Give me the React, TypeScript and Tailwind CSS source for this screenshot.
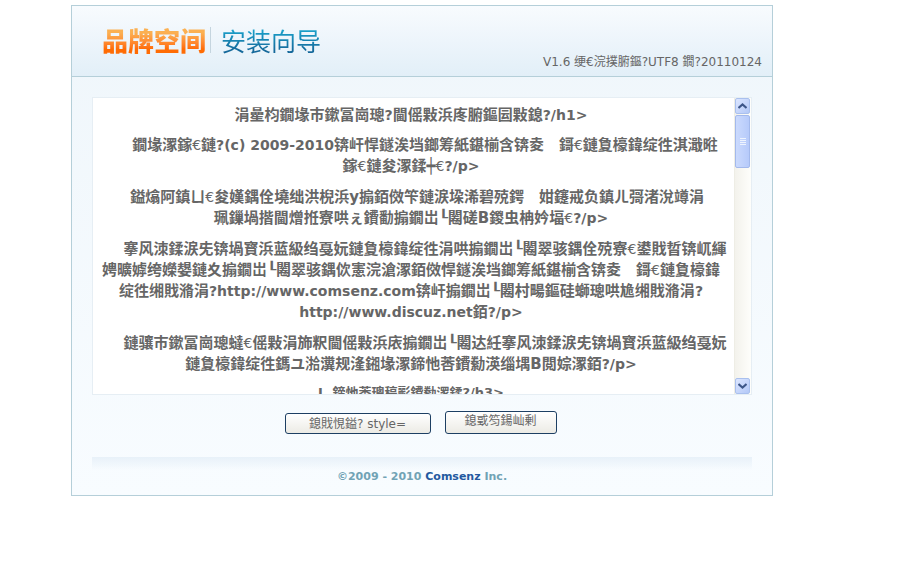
import { Fragment } from 'react';

const LICENSE: string[][] = [
  [
    '鐗堟潈鎵€鏈?(c) 2009-2010锛屽悍鐩涘垱鎯筹紙鍖椾含锛夌　鎶€鏈夐檺鍏绽徃淇濈暀',
    '鎵€鏈夋潈鍒┿€?/p>',
  ],
  [
    '鎰熻阿鎮ㄩ€夋嫨鍝佺墝绌洪棿浜у搧銆傚笇鏈涙垜浠碧殑鍔　姏鑳戒负鎮ㄦ彁渚涗竴涓\u00a0\u00a0\u00a0',
    '珮鏁堝揩閫熷拰寮哄ぇ鐨勫搧鐗岀┖闂磋В鍐虫柟妗堛€?/p>',
  ],
  [
    '搴风洓鍒涙兂锛堝寳浜蓝級绉戞妧鏈夐檺鍏绽徃涓哄搧鐗岀┖闂翠骇鍝佺殑寮€鍙戝晢锛屼緷',
    '娉曠嫭绔嬫嫢鏈夊搧鐗岀┖闂翠骇鍝佽憲浣滄潈銆傚悍鐩涘垱鎯筹紙鍖椾含锛夌　鎶€鏈夐檺鍏',
    '绽徃缃戝潃涓?http://www.comsenz.com锛屽搧鐗岀┖闂村畼鏂硅螄璁哄尯缃戝潃涓?',
    'http://www.discuz.net銆?/p>',
  ],
  [
    '鏈骧巿鏉冨崗璁蟽€傜敤涓斾粎閫傜敤浜庡搧鐗岀┖闂达紝搴风洓鍒涙兂锛堝寳浜蓝級绉戞妧',
    '鏈夐檺鍏绽徃鎷ユ湁瀵规湰鎺堟潈鍗忚莕鐨勬渶缁堣В閲婃潈銆?/p>',
  ],
];

// ASCII runs are set one pixel smaller than the ideographs around them
function Mixed({ text }: { text: string }) {
  return (
    <>
      {text.split(/([ -~]+|€)/).map((part, i) => {
        if (part === '€') {
          return (
            <span key={i} className="text-[14px] font-normal">
              {part}
            </span>
          );
        }
        return i % 2 ? (
          <span key={i} className="text-[14px]">
            {part}
          </span>
        ) : (
          <Fragment key={i}>{part}</Fragment>
        );
      })}
    </>
  );
}

function Logo() {
  return (
    <h1 className="flex items-center whitespace-nowrap font-['Noto_Sans_CJK_SC',sans-serif] text-[26px] leading-[36px]">
      <span className="bg-linear-to-b from-[#fbb052] from-30% to-[#ff6c04] to-75% bg-clip-text font-black text-transparent">
        品牌空间
      </span>
      <span className="mr-2.5 ml-1 h-[26px] w-px bg-[#c5d5df]" />
      <span className="bg-linear-to-b from-[#1ba3cc] from-20% to-[#14689a] to-80% bg-clip-text text-[25px] font-normal text-transparent">
        安装向导
      </span>
    </h1>
  );
}

function ScrollArrow({ label, d }: { label: string; d: string }) {
  return (
    <button
      type="button"
      aria-label={label}
      className="flex h-4 w-[15px] shrink-0 items-center justify-center rounded-[2px] border border-[#a9c0ee] bg-linear-to-br from-[#dce6ff] to-[#b3c8f7]"
    >
      <svg width="9" height="6" viewBox="0 0 9 6" fill="none" stroke="#3d5688" strokeWidth="2">
        <path d={d} />
      </svg>
    </button>
  );
}

function ScrollBar() {
  return (
    <div className="flex w-[17px] shrink-0 flex-col border-l border-[#eeede5] bg-linear-to-r from-[#f3f2ec] to-[#fefefb]">
      <ScrollArrow label="Scroll up" d="M0.5 5 4.5 1.4 8.5 5" />
      <div className="mt-px flex h-[53px] w-[15px] flex-col items-center justify-center gap-px rounded-[2px] border border-[#a3b9ec] bg-linear-to-r from-[#cbdafd] to-[#b6cafa]">
        <i className="h-px w-[6px] bg-[#eef4fe]" />
        <i className="h-px w-[6px] bg-[#eef4fe]" />
        <i className="h-px w-[6px] bg-[#eef4fe]" />
        <i className="h-px w-[6px] bg-[#eef4fe]" />
      </div>
      <div className="grow" />
      <ScrollArrow label="Scroll down" d="M0.5 1 4.5 4.6 8.5 1" />
    </div>
  );
}

export default function App() {
  return (
    <div className="px-[71px] pt-[5px] font-['DejaVu_Sans','Noto_Sans_CJK_SC',sans-serif] text-xs text-[#666]">
      <div className="max-w-[702px] border border-[#b5cfd9] bg-linear-to-b from-[#eff6fb] to-[#f8fcff]">
        <header className="flex h-[71px] items-end justify-between border-b border-[#b5cfd9] bg-linear-to-b from-[#f8fbfe] to-[#e2eff8] pr-2.5 pl-[30px]">
          <div className="pb-[18px]">
            <Logo />
          </div>
          <p className="pb-[5px] leading-[18px]">V1.6 绠€浣撲腑鏂?UTF8 鐗?20110124</p>
        </header>

        <main className="px-5 pt-5">
          <div className="flex h-[298px] overflow-hidden border border-[#e6eef4] bg-white">
            <div
              tabIndex={0}
              className="h-full min-w-0 flex-1 overflow-x-hidden overflow-y-auto pr-[5px] text-center text-[15px] leading-[21px] font-bold whitespace-nowrap outline-none [scrollbar-width:none]"
            >
              <h2 className="mt-[7px] mb-[9px]">
                <Mixed text="涓曐枃鐗堟巿鏉冨崗璁?閫傜敤浜庝腑鏂囩敤鎴?/h1>" />
              </h2>
              {LICENSE.map((lines, i) => (
                <p key={i} className="mb-[10px] indent-[28px]">
                  {lines.map((line, j) => (
                    <Fragment key={j}>
                      {j > 0 && <br />}
                      <Mixed text={line} />
                    </Fragment>
                  ))}
                </p>
              ))}
              <h3 className="text-[13px] leading-[16px]">I. 鍗忚莕璁稿彲鐨勬潈鍒?/h3&gt;</h3>
            </div>
            <ScrollBar />
          </div>

          <div className="flex items-start justify-center gap-3.5 pt-4 pr-[3px]">
            <button
              type="button"
              className="mt-0.5 h-[21px] w-[146px] rounded-[3px] border border-[#1d3f63] bg-linear-to-b from-white to-[#ecebe5]"
            >
              鎴戝悓鎰? style=
            </button>
            <button
              type="button"
              className="h-[23px] w-[112px] rounded-[3px] border border-[#1d3f63] bg-linear-to-b from-white to-[#ecebe5] pb-1"
            >
              鎴戜笉鍚屾剰
            </button>
          </div>

          <footer className="mt-[23px] h-[38px] bg-linear-to-b from-[#e8f1f9] to-transparent to-35% pt-[11px] text-center text-[11px] leading-[18px] font-bold text-[#71a3b5]">
            ©2009 - 2010{' '}
            <a href="#" className="text-[#2359a0]">
              Comsenz
            </a>{' '}
            Inc.
          </footer>
        </main>
      </div>
    </div>
  );
}
